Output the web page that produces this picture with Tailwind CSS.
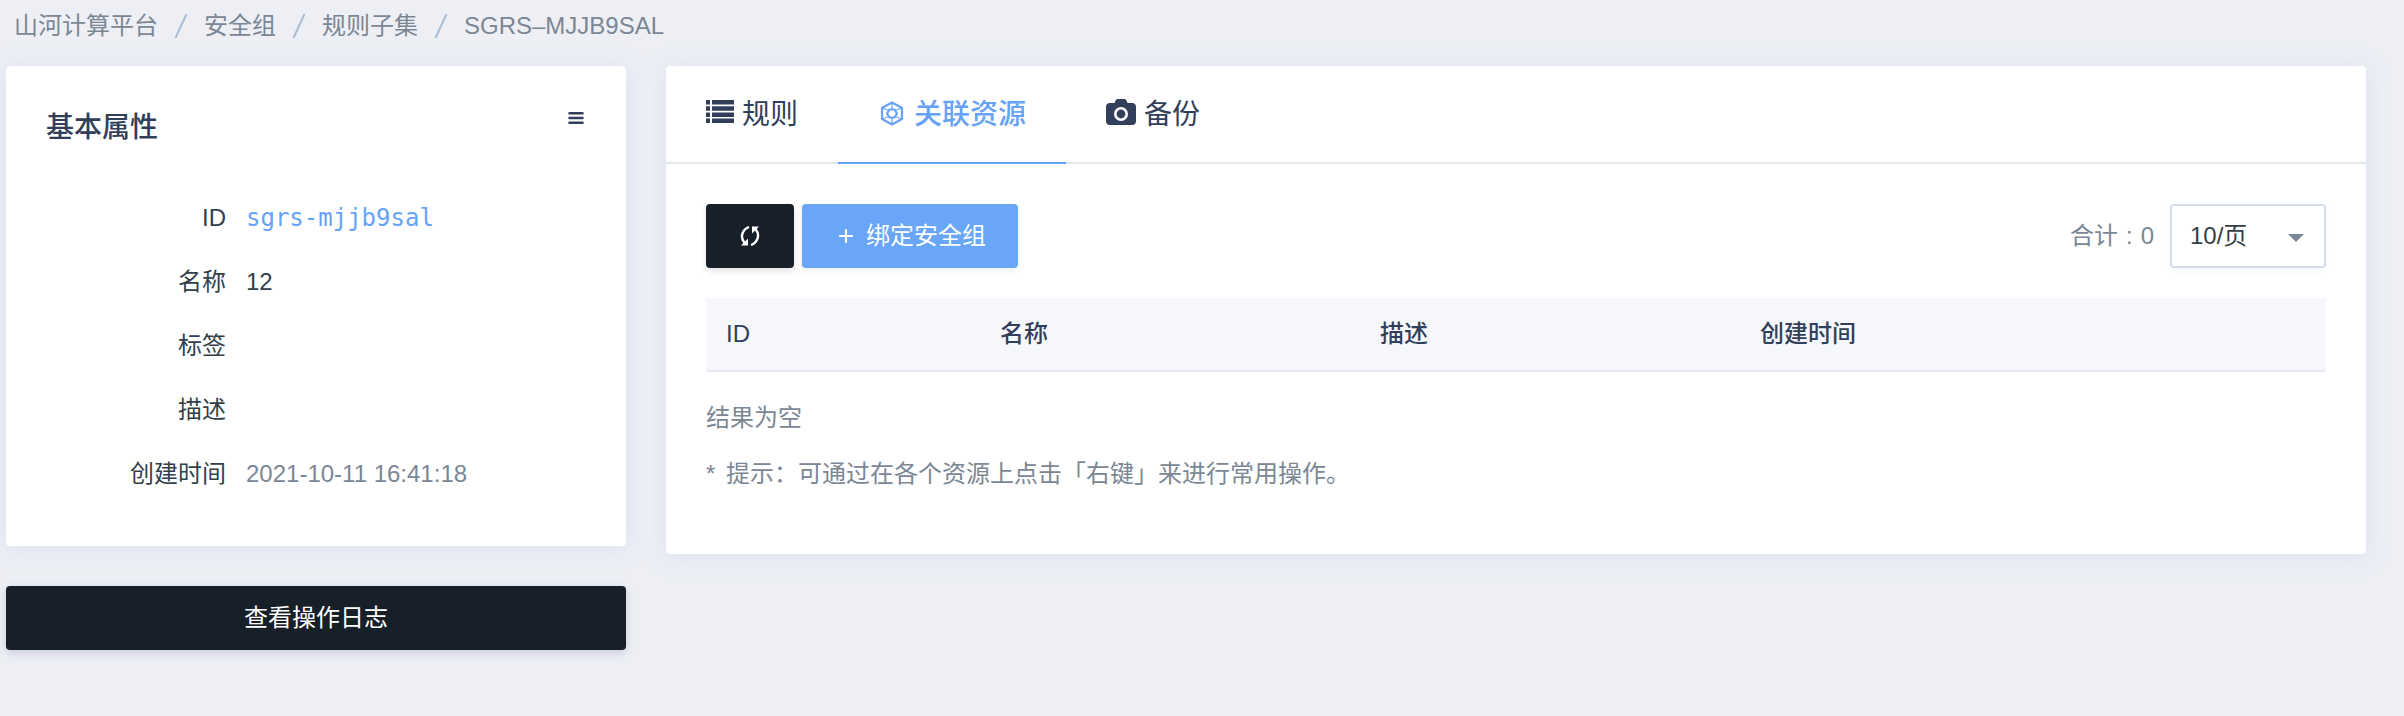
<!DOCTYPE html>
<html lang="zh-CN">
<head>
<meta charset="utf-8">
<meta name="viewport" content="width=device-width, initial-scale=1">
<title>规则子集</title>
<script src="https://cdn.jsdelivr.net/npm/@tailwindcss/browser@4"></script>
</head>
<body class="min-h-screen bg-[#edeff5] font-['Liberation_Sans','Noto_Sans_CJK_SC',sans-serif] text-2xl leading-8 text-[#7b8794]">
<nav aria-label="面包屑" class="px-3.5 pt-[10px]">
  <ol class="flex items-center gap-4">
    <li><a href="#">山河计算平台</a></li>
    <li aria-hidden="true"><svg class="h-6 w-3.5" viewBox="0 0 14 24" fill="none" stroke="#a9bdd6" stroke-width="2"><path d="M12.500 0L1.500 24"/></svg></li>
    <li><a href="#">安全组</a></li>
    <li aria-hidden="true"><svg class="h-6 w-3.5" viewBox="0 0 14 24" fill="none" stroke="#a9bdd6" stroke-width="2"><path d="M12.500 0L1.500 24"/></svg></li>
    <li><a href="#">规则子集</a></li>
    <li aria-hidden="true"><svg class="h-6 w-3.5" viewBox="0 0 14 24" fill="none" stroke="#a9bdd6" stroke-width="2"><path d="M12.500 0L1.500 24"/></svg></li>
    <li aria-current="page">SGRS–MJJB9SAL</li>
  </ol>
</nav>

<main class="flex items-start gap-10 pt-6 pr-[38px] pb-10 pl-1.5">
  <aside class="flex w-[620px] shrink-0 flex-col gap-10">
    <section class="rounded bg-white px-10 pt-10 pb-10 shadow-[0_2px_20px_rgba(190,205,225,0.4)]">
      <header class="flex items-start justify-between">
        <h2 class="pt-0.5 text-[28px] leading-10 font-medium text-[#323f5b]">基本属性</h2>
        <button type="button" aria-label="菜单" class="p-0.5"><svg class="h-6 w-4" viewBox="0 0 16 24" fill="none" stroke="#323f5b" stroke-width="2.500" stroke-linecap="round"><path d="M1.500 5.200h13M1.500 10h13M1.500 14.800h13"/></svg></button>
      </header>
      <dl class="grid grid-cols-[180px_1fr] gap-x-5 gap-y-8 pt-[54px] pb-4 text-[#323f4b]">
        <dt class="text-right">ID</dt><dd class="font-['DejaVu_Sans_Mono',monospace] text-[#67a2f7]">sgrs-mjjb9sal</dd>
        <dt class="text-right">名称</dt><dd>12</dd>
        <dt class="text-right">标签</dt><dd></dd>
        <dt class="text-right">描述</dt><dd></dd>
        <dt class="text-right">创建时间</dt><dd class="text-[#7b8794]">2021-10-11 16:41:18</dd>
      </dl>
    </section>
    <button type="button" class="h-16 rounded bg-[#171f28] text-white shadow-[0_3px_8px_rgba(60,70,110,0.2)]">查看操作日志</button>
  </aside>

  <section class="min-w-0 flex-1 rounded bg-white shadow-[0_2px_20px_rgba(190,205,225,0.4)]">
    <div role="tablist" class="flex h-[98px] border-b-2 border-[#e4e8ef] text-[28px] text-[#323f5b]">
      <button type="button" role="tab" class="-mb-0.5 flex items-center gap-2 border-b-2 border-transparent px-10">
        <svg class="h-7 w-7" viewBox="0 0 28 28" fill="#323f5b"><path d="M0 2h4v4.500H0zM6 2h22v4.500H6zM0 8.200h4v4.500H0zM6 8.200h22v4.500H6zM0 14.400h4v4.500H0zM6 14.400h22v4.500H6zM0 20.600h4v4.500H0zM6 20.600h22v4.500H6z" transform="translate(0 -2)"/></svg><span class="pt-0.5">规则</span></button>
      <button type="button" role="tab" aria-selected="true" class="-mb-0.5 flex items-center gap-2 border-b-2 border-[#67a2f7] px-10 font-medium text-[#67a2f7]">
        <svg class="h-7 w-7" viewBox="0 0 28 28" fill="none" stroke="#67a2f7" stroke-width="2.200" stroke-linejoin="round"><path d="M14 2.500L24 8v11L14 24.500L4 19V8z"/><path d="M11.500 9.500h5l2.500 4l-2.500 4h-5l-2.500-4z"/><path stroke-width="1.200" d="M4 8l7 2.500M24 8l-7 2.500M4 19l7-2.500M24 19l-7-2.500M14 2.500v7M14 17.500v7"/></svg><span class="pt-0.5">关联资源</span></button>
      <button type="button" role="tab" class="-mb-0.5 flex items-center gap-2 border-b-2 border-transparent px-10">
        <svg class="h-[30px] w-[30px]" viewBox="0 0 30 30"><path fill="#323f5b" d="M4 4h4.500L9.500 1.500Q10.100 0 11.600 0h6.800q1.500 0 2.100 1.500L21.500 4H26q4 0 4 4v14q0 4-4 4H4q-4 0-4-4V8q0-4 4-4z"/><circle cx="15" cy="15" r="5.700" fill="none" stroke="white" stroke-width="2.600"/></svg><span class="pt-0.5">备份</span></button>
    </div>

    <div class="px-10 pt-10 pb-16">
      <div class="flex items-center justify-between">
        <div class="flex gap-2">
          <button type="button" aria-label="刷新" class="flex h-16 w-[88px] items-center justify-center rounded bg-[#171f28] shadow-[0_3px_6px_rgba(50,60,70,0.15)]">
            <svg class="h-5 w-5" viewBox="0 0 20 20"><path fill="none" stroke="white" stroke-width="2.400" d="M9 1C2.500 3.500-.5 11 4.500 17M11 19c6.500-2.500 9.500-10 4.500-16"/><path fill="white" d="M8 12.500V19.500H1zM12 7.500V.5H19z"/></svg>
          </button>
          <button type="button" class="flex h-16 items-center gap-2 rounded bg-[#69a6f7] px-8 text-white shadow-[0_3px_6px_rgba(100,180,160,0.15)]">
            <svg class="h-6 w-6" viewBox="0 0 24 24" fill="none" stroke="white" stroke-width="2.200" stroke-linecap="round"><path d="M6 12h12M12 6v12"/></svg>绑定安全组</button>
        </div>
        <div class="flex items-center gap-4">
          <span class="flex gap-2"><span>合计</span><span>:</span><span>0</span></span>
          <div class="relative">
            <select aria-label="每页条数" class="h-16 w-[156px] appearance-none rounded border-2 border-[#d5dde9] bg-white px-[18px] text-[#323f4b] shadow-[0_3px_6px_rgba(50,60,70,0.04)]"><option>10/页</option><option>20/页</option><option>50/页</option></select>
            <svg class="pointer-events-none absolute top-[30px] right-[22px] h-2 w-4" viewBox="0 0 16 8" fill="#7b8794"><path d="M0 0h16L8 8z"/></svg>
          </div>
        </div>
      </div>

      <table class="mt-[30px] w-full table-fixed text-left">
        <thead>
          <tr class="h-[73px] border-b-2 border-[#e4e8ef] bg-[#f5f7fb] text-[#323f5b]">
            <th scope="col" class="w-[274px] px-5 font-medium">ID</th>
            <th scope="col" class="w-[380px] px-5 font-medium">名称</th>
            <th scope="col" class="w-[380px] px-5 font-medium">描述</th>
            <th scope="col" class="px-5 font-medium">创建时间</th>
          </tr>
        </thead>
      </table>
      <p class="mt-[30px]">结果为空</p>
      <p class="mt-6"><span class="mr-1">*</span> 提示：可通过在各个资源上点击「右键」来进行常用操作。</p>
    </div>
  </section>
</main>
</body>
</html>
